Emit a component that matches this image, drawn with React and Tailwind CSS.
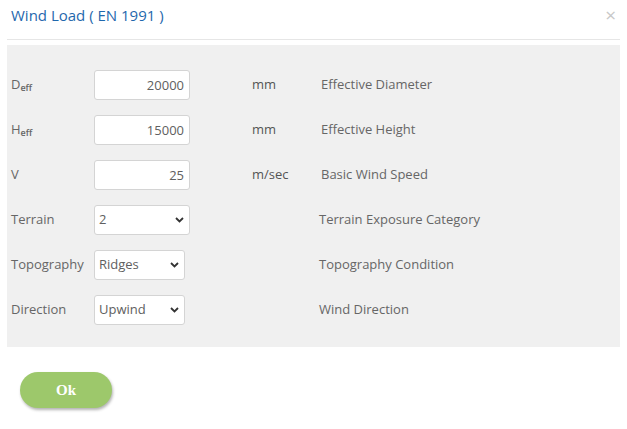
const rows = [
  { label: "D", sub: "eff", value: "20000", unit: "mm", desc: "Effective Diameter" },
  { label: "H", sub: "eff", value: "15000", unit: "mm", desc: "Effective Height" },
  { label: "V", value: "25", unit: "m/sec", desc: "Basic Wind Speed" },
];

const selects = [
  { label: "Terrain", value: "2", options: ["0", "1", "2", "3", "4"], width: "w-[96px]", desc: "Terrain Exposure Category" },
  { label: "Topography", value: "Ridges", options: ["Flat", "Hills", "Ridges", "Cliffs"], width: "w-[91px]", desc: "Topography Condition" },
  { label: "Direction", value: "Upwind", options: ["Upwind", "Downwind"], width: "w-[91px]", desc: "Wind Direction" },
];

function Chevron() {
  return (
    <svg
      className="pointer-events-none absolute right-[6px] top-1/2 -translate-y-1/2"
      width="9"
      height="6"
      viewBox="0 0 9 6"
    >
      <path d="M1 1l3.5 3.5L8 1" fill="none" stroke="#333" strokeWidth="1.8" />
    </svg>
  );
}

export default function App() {
  return (
    <div
      className="w-[627px] h-[429px] bg-white relative"
      style={{ fontFamily: '"Open Sans", "Noto Sans", sans-serif' }}
    >
      <div className="h-[39px] flex items-start justify-between pl-[11px] pr-[11px] pt-[6px]">
        <h2 className="text-[15px] text-[#1f68ad] leading-[18px]">Wind Load ( EN 1991 )</h2>
        <span className="text-[19px] text-[#c8c8c8] leading-[18px]">×</span>
      </div>
      <div className="mx-[7px] h-[1px] bg-[#e6e6e6]" />

      <div className="mt-[5px] ml-[7px] w-[613px] bg-[#f0f0f0] pl-[4px] pt-[17px] pb-[15px] text-[13px] text-[#666]">
        {rows.map((r) => (
          <div key={r.desc} className="h-[45px] flex items-center">
            <div className="w-[83px] text-[#666]">
              {r.label}
              {r.sub && <span className="relative top-[2px] text-[9px] font-semibold">{r.sub}</span>}
            </div>
            <input
              readOnly
              value={r.value}
              className="w-[96px] h-[30px] bg-white border border-[#d4d4d4] rounded-[3px] text-right pr-[5px] text-[13px] text-[#606060] outline-none"
            />
            <div className="ml-[62px] w-[69px] text-[#555]">{r.unit}</div>
            <div>{r.desc}</div>
          </div>
        ))}
        {selects.map((s) => (
          <div key={s.desc} className="h-[45px] flex items-center">
            <div className="w-[83px]">{s.label}</div>
            <div className={`relative ${s.width}`}>
              <select
                defaultValue={s.value}
                className={`${s.width} h-[30px] appearance-none bg-white border border-[#d4d4d4] rounded-[3px] pl-[4px] text-[13px] text-[#606060] outline-none`}
              >
                {s.options.map((o) => (
                  <option key={o}>{o}</option>
                ))}
              </select>
              <Chevron />
            </div>
            <div className={s.width === "w-[96px]" ? "ml-[129px]" : "ml-[134px]"}>{s.desc}</div>
          </div>
        ))}
      </div>

      <div className="pl-[20px] pt-[25px]">
        <button
          className="w-[92px] h-[36px] rounded-full bg-[#9dc86b] text-white text-[15px] font-bold shadow-[1px_2px_3px_rgba(0,0,0,0.3)]"
          style={{ fontFamily: '"Liberation Serif", serif' }}
        >
          Ok
        </button>
      </div>
    </div>
  );
}
